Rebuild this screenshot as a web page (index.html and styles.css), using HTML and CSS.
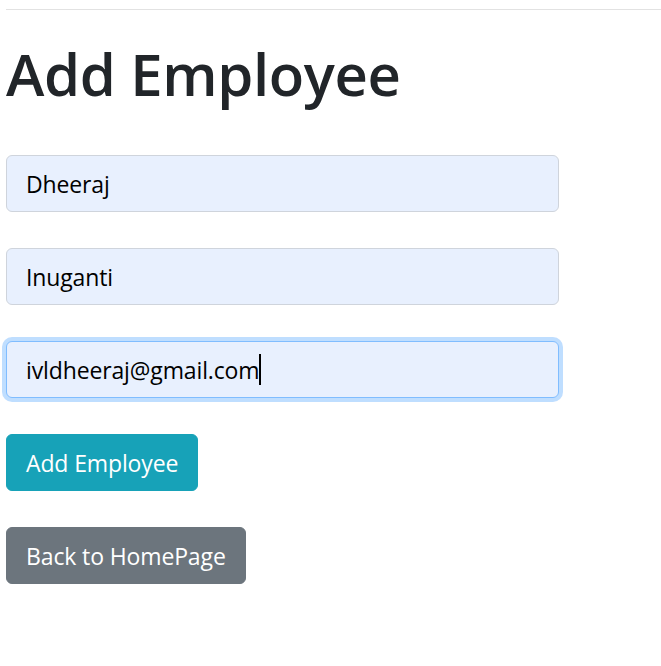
FILE: index.html
```html
<!DOCTYPE html>
<html>
<head>
<meta charset="utf-8">
<title>Add Employee</title>
<link rel="stylesheet" href="styles.css">
</head>
<body>
<div class="page">
  <hr class="rule">
  <h1 class="title">Add Employee</h1>
  <form class="form">
    <input class="field" type="text" value="Dheeraj">
    <input class="field" type="text" value="Inuganti">
    <div class="field field-focus">ivldheeraj@gmail.com<span class="caret"></span></div>
    <div class="row"><button type="button" class="btn btn-info">Add Employee</button></div>
    <div class="row"><button type="button" class="btn btn-secondary">Back to HomePage</button></div>
  </form>
</div>
</body>
</html>
```
FILE: styles.css
```css
html, body {
  margin: 0;
  padding: 0;
  background: #ffffff;
}
body {
  font-family: "Open Sans", "Noto Sans", sans-serif;
  color: #212529;
}
.page {
  padding: 9px 0 0 6px;
}
.rule {
  margin: 0;
  border: 0;
  border-top: 1px solid #e2e2e2;
  height: 0;
}
.title {
  margin: 28px 0 0 0;
  font-size: 58px;
  line-height: 72px;
  font-weight: 600;
  letter-spacing: -0.35px;
  color: #212529;
}
.form {
  margin-top: 45px;
  display: flex;
  flex-direction: column;
  gap: 36px;
}
.field {
  box-sizing: border-box;
  width: 553px;
  height: 57px;
  margin: 0;
  padding: 0 19px;
  font-family: inherit;
  font-size: 23px;
  letter-spacing: -0.13px;
  line-height: 36px;
  color: #000000;
  background: #e8f0fe;
  border: 1px solid #cfd4dc;
  border-radius: 6px;
  outline: none;
}
.field-focus {
  display: flex;
  align-items: center;
  border-color: #80bdff;
  box-shadow: 0 0 0 4px rgba(0, 123, 255, 0.25);
  white-space: pre;
}
.caret {
  display: inline-block;
  width: 2px;
  height: 31px;
  background: #000000;
  margin-left: 0;
  align-self: center;
}
.row {
  display: flex;
}
.btn {
  box-sizing: border-box;
  height: 57px;
  padding: 0 19px;
  font-family: inherit;
  font-size: 23px;
  letter-spacing: -0.13px;
  line-height: 36px;
  color: #ffffff;
  border: 1px solid transparent;
  border-radius: 6px;
  cursor: pointer;
}
.btn-info {
  background: #17a2b8;
  border-color: #17a2b8;
}
.btn-secondary {
  background: #6c757d;
  border-color: #6c757d;
}
```
